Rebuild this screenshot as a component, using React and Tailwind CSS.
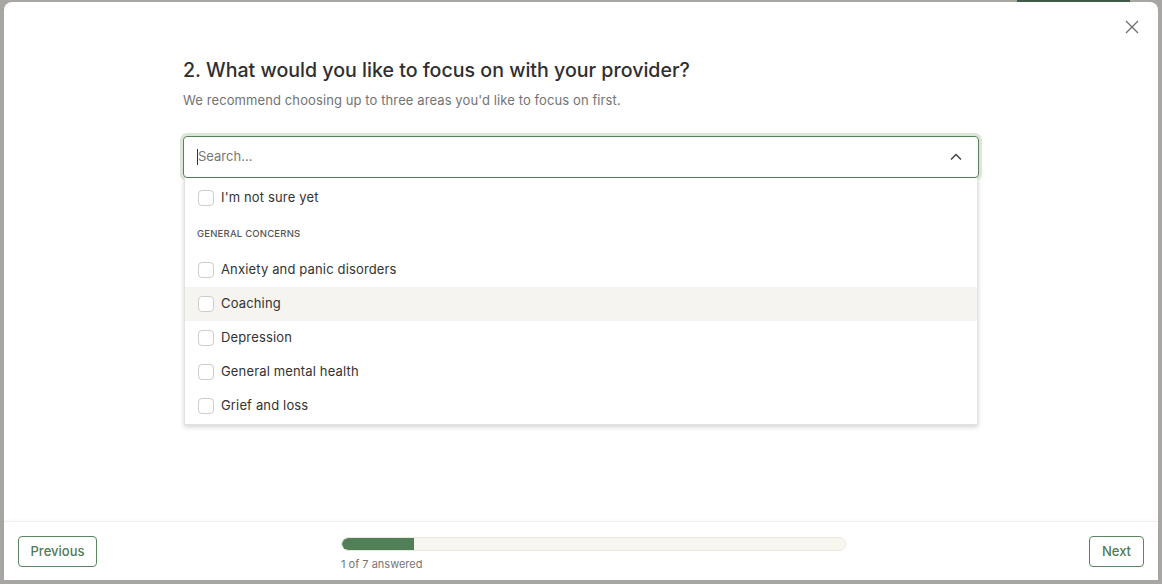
import React, { useState } from 'react';

const options = [
  { id: 'unsure', label: "I'm not sure yet" },
];

const general = [
  'Anxiety and panic disorders',
  'Coaching',
  'Depression',
  'General mental health',
  'Grief and loss',
];

function Box() {
  return <span className="w-4 h-4 shrink-0 rounded-[4px] border border-[#cfcdc8] bg-white" />;
}

function Row({ label, active }) {
  return (
    <div className={`h-[34px] flex items-center gap-[7px] pl-[13px] ${active ? 'bg-[#f5f4f0]' : ''}`}>
      <Box />
      <span className="text-[13px] text-[#333] tracking-[0.15px]">{label}</span>
    </div>
  );
}

export default function App() {
  const [hover] = useState('Coaching');
  return (
    <div className="w-[1162px] h-[584px] bg-[#a8a6a2] flex flex-col overflow-hidden" style={{ fontFamily: 'Inter, "Noto Sans", sans-serif' }}>
      <div className="h-[2px] shrink-0 flex">
        <div className="w-[1017px]" />
        <div className="w-[113px] bg-[#3f5b45]" />
      </div>
      <div className="flex-1 flex px-[4px] pb-[4px]">
        <div className="flex-1 bg-white rounded-t-[8px] flex flex-col">
          <div className="relative flex-1">
            <button className="absolute right-[18px] top-[17px] text-[#6e6e6e]">
              <svg width="16" height="16" viewBox="0 0 16 16" fill="none" stroke="currentColor" strokeWidth="1.3">
                <path d="M2 2l12 12M14 2L2 14" />
              </svg>
            </button>
            <div className="pl-[179px] pr-[179px] pt-[54px]">
              <h2 className="text-[19.6px] leading-[28px] font-medium text-[#2f2f2f]">2. What would you like to focus on with your provider?</h2>
              <p className="mt-[7px] text-[13px] leading-[18px] text-[#737373] tracking-[0.1px]">We recommend choosing up to three areas you'd like to focus on first.</p>
              <div className="mt-[27px] h-[42px] rounded-[4px] border border-[#58805d] ring-[3px] ring-[#d9e6d8] flex items-center pl-[13px] pr-[16px]">
                <span className="w-px h-[16px] bg-[#333]" />
                <span className="text-[13px] text-[#777]">Search...</span>
                <span className="flex-1" />
                <svg width="12" height="8" viewBox="0 0 12 8" fill="none" stroke="#444" strokeWidth="1.5">
                  <path d="M1 6.5l5-5 5 5" />
                </svg>
              </div>
              <div className="mx-px bg-white shadow-[0_2px_5px_rgba(0,0,0,0.18)] border-x border-b border-[#e2e2e2] flex flex-col pt-[3px] pb-[1px]">
                {options.map((o) => <Row key={o.id} label={o.label} />)}
                <div className="h-[38px] flex items-center pl-[12px] text-[9.5px] font-medium tracking-[0.2px] text-[#555]">GENERAL CONCERNS</div>
                {general.map((g) => <Row key={g} label={g} active={g === hover} />)}
              </div>
            </div>
          </div>
          <div className="h-[59px] shrink-0 border-t border-[#f0f0f0] shadow-[0_-1px_3px_rgba(0,0,0,0.03)] flex items-start pt-[14px] px-[14px]">
            <button className="w-[79px] h-[31px] rounded-[4px] border border-[#5b8561] text-[13px] font-medium text-[#4f7a55]">Previous</button>
            <div className="ml-[244px] w-[505px] pt-[1px]">
              <div className="h-[14px] rounded-full bg-[#f7f7ef] border border-[#e8e8df] overflow-hidden">
                <div className="h-full bg-[#527f58] rounded-l-full" style={{ width: `${(1 / 7) * 100}%` }} />
              </div>
              <div className="mt-[5px] text-[11px] text-[#767676]">1 of 7 answered</div>
            </div>
            <span className="flex-1" />
            <button className="w-[55px] h-[31px] rounded-[4px] border border-[#5b8561] text-[13px] font-medium text-[#4f7a55]">Next</button>
          </div>
        </div>
      </div>
    </div>
  );
}
